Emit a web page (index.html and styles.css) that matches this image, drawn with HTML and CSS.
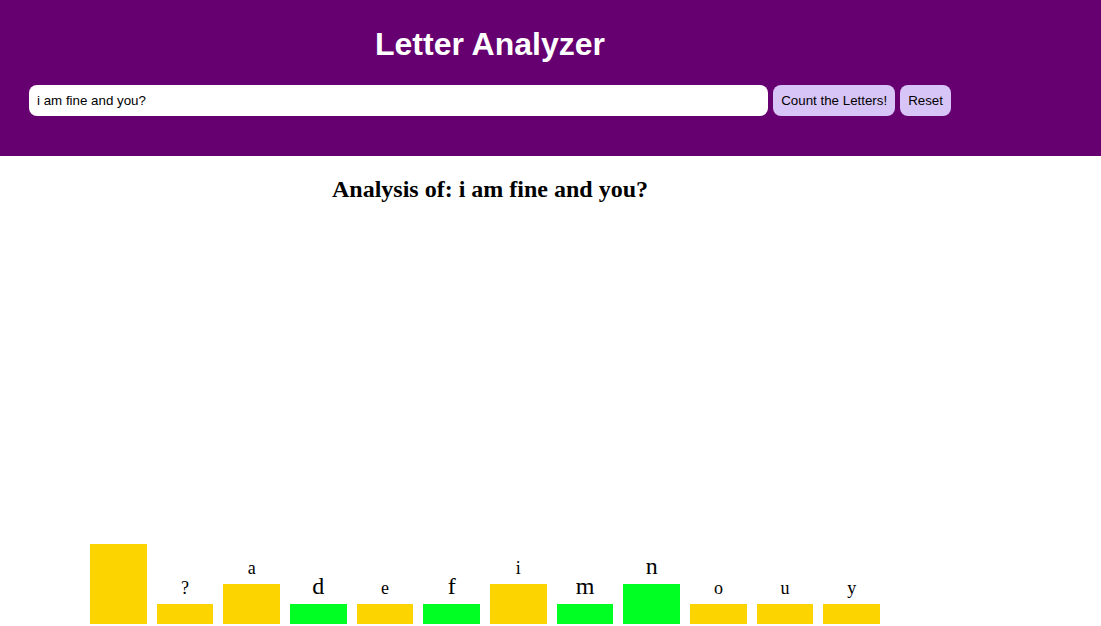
FILE: index.html
```html
<!DOCTYPE html>
<html>
<head>
<meta charset="utf-8">
<title>Letter Analyzer</title>
<link rel="stylesheet" href="styles.css">
</head>
<body>
<header class="top">
  <div class="wrap">
    <h1 class="title">Letter Analyzer</h1>
    <form class="form">
      <input class="field" type="text" value="i am fine and you?">
      <button class="btn" type="button">Count the Letters!</button>
      <button class="btn" type="button">Reset</button>
    </form>
  </div>
</header>
<main class="wrap">
  <h2 class="analysis">Analysis of: i am fine and you?</h2>
</main>
<div class="chart">
  <div class="col"><span class="label small">&nbsp;</span><div class="bar yellow" style="height:80px"></div></div>
  <div class="col"><span class="label small">?</span><div class="bar yellow" style="height:20px"></div></div>
  <div class="col"><span class="label small">a</span><div class="bar yellow" style="height:40px"></div></div>
  <div class="col"><span class="label big">d</span><div class="bar green" style="height:20px"></div></div>
  <div class="col"><span class="label small">e</span><div class="bar yellow" style="height:20px"></div></div>
  <div class="col"><span class="label big">f</span><div class="bar green" style="height:20px"></div></div>
  <div class="col"><span class="label small">i</span><div class="bar yellow" style="height:40px"></div></div>
  <div class="col"><span class="label big">m</span><div class="bar green" style="height:20px"></div></div>
  <div class="col"><span class="label big">n</span><div class="bar green" style="height:40px"></div></div>
  <div class="col"><span class="label small">o</span><div class="bar yellow" style="height:20px"></div></div>
  <div class="col"><span class="label small">u</span><div class="bar yellow" style="height:20px"></div></div>
  <div class="col"><span class="label small">y</span><div class="bar yellow" style="height:20px"></div></div>
</div>
</body>
</html>
```
FILE: styles.css
```css
body {
  margin: 0;
  font-family: "Liberation Serif", "Times New Roman", serif;
  background: #ffffff;
  color: #000000;
}

.top {
  background: #660070;
  padding: 26px 0 40px;
}

.wrap {
  width: 922px;
  margin-left: 29px;
}

.title {
  margin: 0;
  font-family: "Liberation Sans", Arial, sans-serif;
  font-size: 32px;
  font-weight: bold;
  line-height: 37px;
  color: #ffffff;
  text-align: center;
}

.form {
  display: flex;
  gap: 5px;
  margin-top: 22px;
}

.field {
  flex: 1;
  min-width: 0;
  height: 31px;
  box-sizing: border-box;
  border: none;
  border-radius: 8px;
  padding: 0 8px;
  font-family: "Liberation Sans", Arial, sans-serif;
  font-size: 13.33px;
  color: #000000;
  background: #ffffff;
  outline: none;
}

.btn {
  height: 31px;
  box-sizing: border-box;
  border: none;
  border-radius: 8px;
  padding: 0 8px;
  font-family: "Liberation Sans", Arial, sans-serif;
  font-size: 13.33px;
  color: #000000;
  background: #d8c5f8;
}

.analysis {
  margin: 20px 0 21px;
  font-size: 24px;
  font-weight: bold;
  text-align: center;
}

.chart {
  display: flex;
  align-items: flex-end;
  width: 800px;
  height: 400px;
  margin-left: 85px;
}

.col {
  flex: 1;
  padding: 0 5px;
  display: flex;
  flex-direction: column;
  align-items: stretch;
  text-align: center;
}

.label {
  display: block;
  margin-bottom: 5px;
}

.small {
  font-size: 18px;
}

.big {
  font-size: 24px;
  margin-bottom: 4px;
}

.bar {
  width: 100%;
}

.yellow {
  background: #fcd500;
}

.green {
  background: #00ff22;
}
```
